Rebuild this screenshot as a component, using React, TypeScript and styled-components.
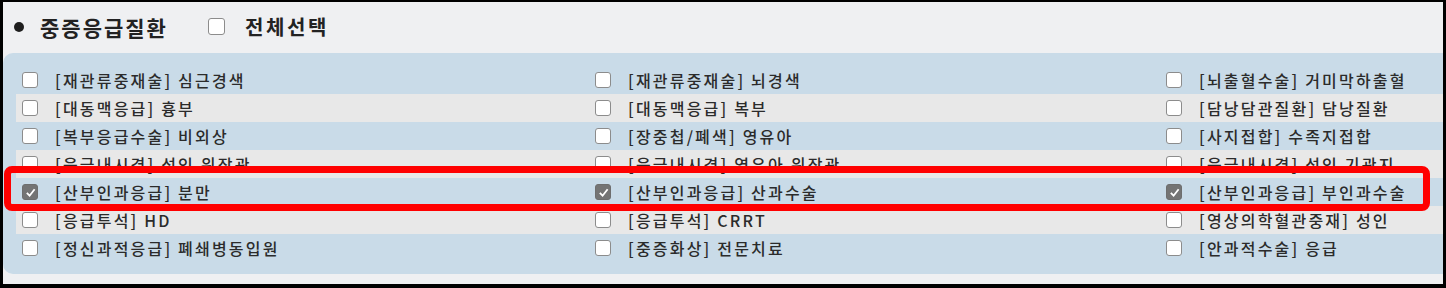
import React from 'react';
import styled, { createGlobalStyle } from 'styled-components';

const GlobalStyle = createGlobalStyle`
    html, body {
        margin: 0;
        padding: 0;
        background: #ffffff;
    }
    body {
        font-family: 'Noto Sans CJK KR', 'Noto Sans', sans-serif;
    }
`;

const Frame = styled.div`
    position: relative;
    width: 1446px;
    height: 288px;
    box-sizing: border-box;
    border-style: solid;
    border-color: #000;
    border-width: 2px 3px 4px 3px;
    background-color: #eff0f2;
    overflow: hidden;
`;

const Header = styled.div`
    height: 51px;
    display: flex;
    align-items: center;
    padding-left: 11px;
    padding-bottom: 2px;
    box-sizing: border-box;
`;

const Bullet = styled.span`
    width: 10px;
    height: 10px;
    border-radius: 50%;
    background-color: #1e1e1e;
    margin-right: 16px;
`;

const Title = styled.h2`
    margin: 0 40px 0 0;
    font-size: 21px;
    font-weight: 700;
    color: #222;
    letter-spacing: 2px;
`;

const SelectAll = styled.label`
    display: flex;
    align-items: center;
    gap: 20px;
    font-size: 20px;
    font-weight: 700;
    color: #222;
    letter-spacing: 2.6px;
`;

const Panel = styled.div`
    background-color: #c9dbe8;
    border-radius: 10px 0 0 10px;
    padding: 13px 0 12px 13px;
`;

const Row = styled.div<{ $alt: boolean }>`
    display: grid;
    grid-template-columns: 573px 571px 1fr;
    height: 28px;
    background-color: ${(p) => (p.$alt ? '#e8e8e8' : 'transparent')};
`;

const Item = styled.label`
    display: flex;
    align-items: center;
    gap: 17px;
    padding-left: 6px;
    font-size: 16px;
    font-weight: 500;
    color: #2b2b2b;
    letter-spacing: 2.2px;
    white-space: nowrap;
`;

const Box = styled.span<{ $checked?: boolean; $size?: number }>`
    flex: none;
    display: inline-flex;
    align-items: center;
    justify-content: center;
    width: ${(p) => p.$size ?? 16}px;
    height: ${(p) => p.$size ?? 16}px;
    box-sizing: border-box;
    border-radius: 3px;
    border: 1.5px solid ${(p) => (p.$checked ? '#6e6e6e' : '#8c8c8c')};
    background-color: ${(p) => (p.$checked ? '#747474' : '#ffffff')};
`;

const Highlight = styled.div`
    position: absolute;
    left: 1px;
    top: 164px;
    width: 1426px;
    height: 45px;
    box-sizing: border-box;
    border: 7px solid #ff0000;
    border-radius: 8px;
    pointer-events: none;
`;

const Check: React.FC<{ checked?: boolean; size?: number }> = ({ checked, size }) => (
    <Box $checked={checked} $size={size}>
        {checked && (
            <svg width="11" height="11" viewBox="0 0 12 12">
                <polyline points="2,6.5 5,9.5 10.5,2.5" fill="none" stroke="#fff" strokeWidth="2" />
            </svg>
        )}
    </Box>
);

const rows: string[][] = [
    ['[재관류중재술] 심근경색', '[재관류중재술] 뇌경색', '[뇌출혈수술] 거미막하출혈'],
    ['[대동맥응급] 흉부', '[대동맥응급] 복부', '[담낭담관질환] 담낭질환'],
    ['[복부응급수술] 비외상', '[장중첩/폐색] 영유아', '[사지접합] 수족지접합'],
    ['[응급내시경] 성인 위장관', '[응급내시경] 영유아 위장관', '[응급내시경] 성인 기관지'],
    ['[산부인과응급] 분만', '[산부인과응급] 산과수술', '[산부인과응급] 부인과수술'],
    ['[응급투석] HD', '[응급투석] CRRT', '[영상의학혈관중재] 성인'],
    ['[정신과적응급] 폐쇄병동입원', '[중증화상] 전문치료', '[안과적수술] 응급'],
];

const checkedRow = 4;

const App: React.FC = () => {
    return (
        <>
            <GlobalStyle />
            <Frame>
                <Header>
                    <Bullet />
                    <Title>중증응급질환</Title>
                    <SelectAll>
                        <Check size={17} />
                        전체선택
                    </SelectAll>
                </Header>
                <Panel>
                    {rows.map((cols, i) => (
                        <Row key={i} $alt={i % 2 === 1}>
                            {cols.map((label) => (
                                <Item key={label}>
                                    <Check checked={i === checkedRow} />
                                    {label}
                                </Item>
                            ))}
                        </Row>
                    ))}
                </Panel>
                <Highlight />
            </Frame>
        </>
    );
};

export default App;
